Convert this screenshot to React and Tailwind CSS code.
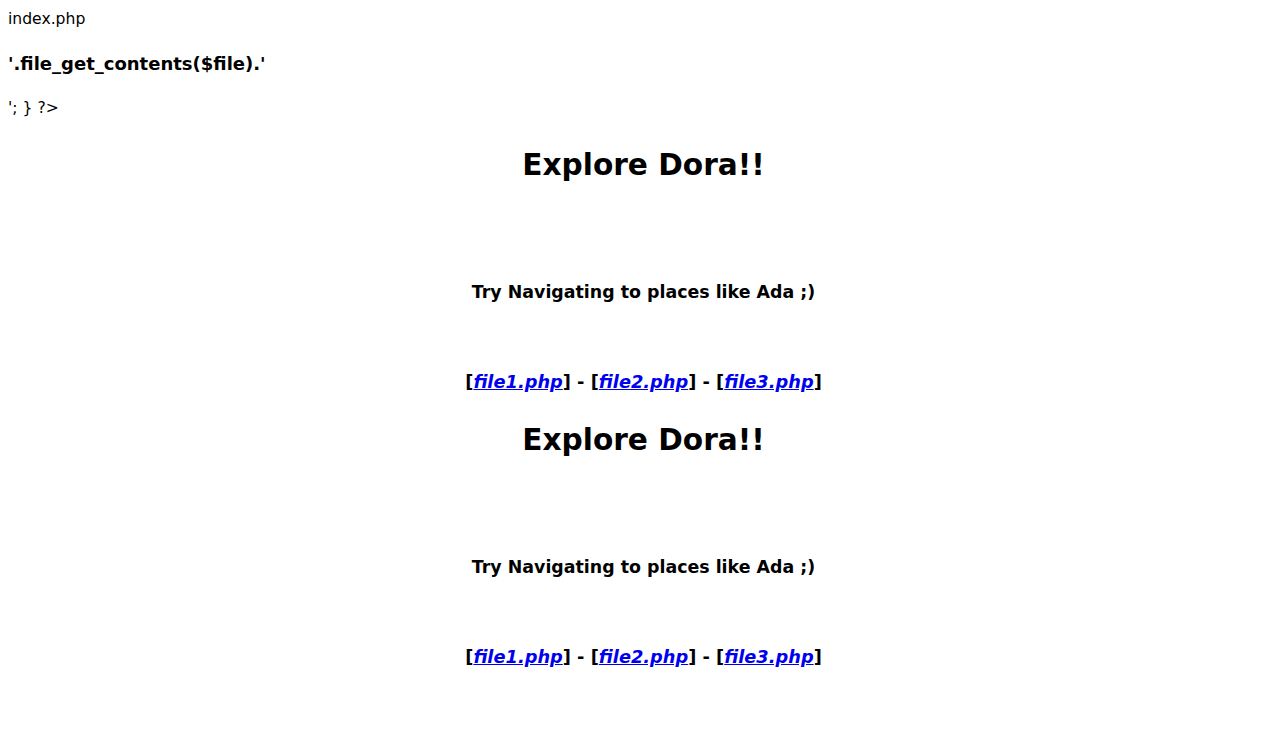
export default function App() {
  const font = { fontFamily: '"DejaVu Sans", Verdana, sans-serif' };
  const Section = ({ mt }) => (
    <>
      <div className={`text-center font-bold text-[29.6px] leading-[36px] h-[36px] ${mt}`}>Explore Dora!!</div>
      <div className="mt-[96px] text-center font-bold text-[17.4px] leading-[26px] h-[26px]">Try Navigating to places like Ada ;)</div>
      <div className="mt-[64px] text-center font-bold text-[17.8px] leading-[26px] h-[26px]">
        [<a href="#" className="italic underline text-[#0000ee]">file1.php</a>] - [
        <a href="#" className="italic underline text-[#0000ee]">file2.php</a>] - [
        <a href="#" className="italic underline text-[#0000ee]">file3.php</a>]
      </div>
    </>
  );
  return (
    <div className="min-h-[750px] bg-white text-black px-[8px] pt-[8px]" style={font}>
      <div className="text-[15.6px] leading-[23px] h-[23px]">index.php</div>
      <div className="mt-[20px] font-bold text-[18px] leading-[26px] h-[26px]">'.file_get_contents($file).'</div>
      <div className="mt-[19px] text-[15.6px] leading-[24px] h-[24px]">'; {"}"} ?&gt;</div>
      <Section mt="mt-[27px]" />
      <Section mt="mt-[27px]" />
    </div>
  );
}
